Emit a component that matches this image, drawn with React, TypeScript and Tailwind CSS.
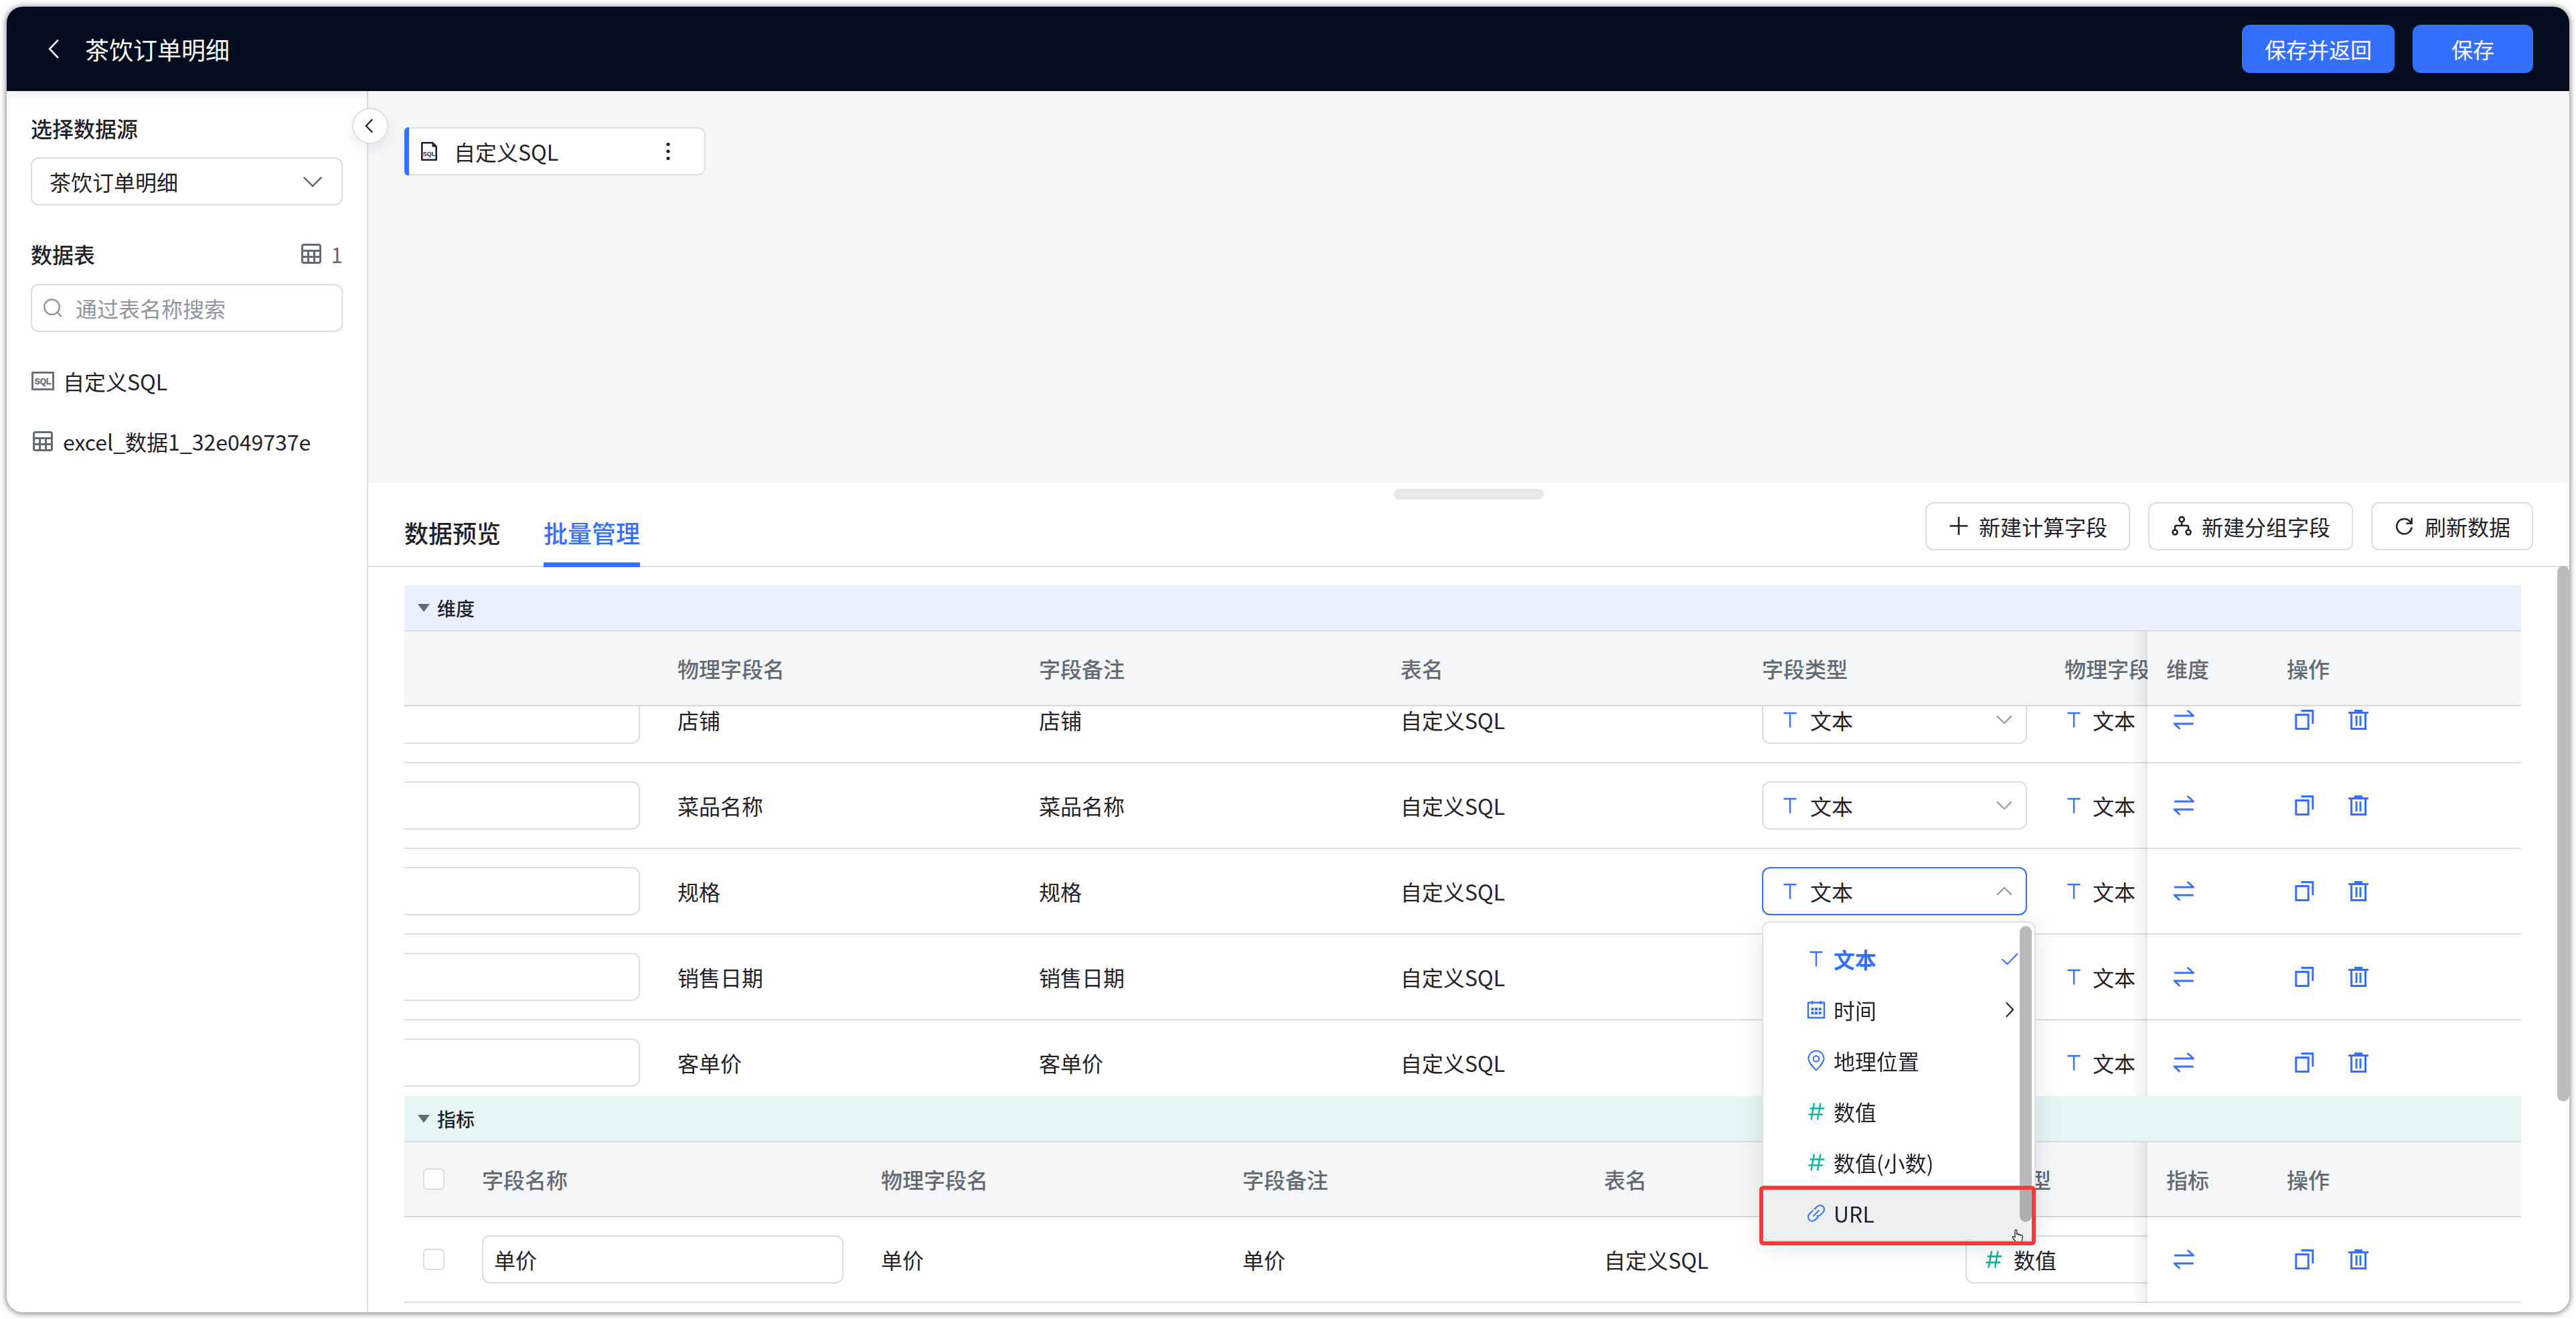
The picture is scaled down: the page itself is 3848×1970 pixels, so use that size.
import React, { useLayoutEffect, useRef } from "react";

type IconProps = { className?: string };

function Chevron({ className = "" }: IconProps) {
  return (
    <svg viewBox="0 0 28 16" fill="none" stroke="currentColor" aria-hidden="true" className={className}>
      <path d="M1.5 1.5 14 14 26.5 1.5" />
    </svg>
  );
}

function ChevronSide({ className = "" }: IconProps) {
  return (
    <svg viewBox="0 0 16 28" fill="none" stroke="currentColor" aria-hidden="true" className={className}>
      <path d="M14 1.5 2 14 14 26.5" />
    </svg>
  );
}

function TableIcon() {
  return (
    <svg viewBox="0 0 30 30" fill="none" stroke="currentColor" strokeWidth="3" aria-hidden="true" className="size-[30px]">
      <rect x="1.5" y="1.5" width="27" height="27" rx="2.5" />
      <path d="M1.5 10.5h27M1.5 19.5h27M10.5 10.5v18M19.5 10.5v18" />
    </svg>
  );
}

function SqlIcon() {
  return (
    <svg viewBox="0 0 34 28" fill="none" stroke="currentColor" aria-hidden="true" className="h-7 w-[34px]">
      <rect x="1.5" y="1.5" width="31" height="25" strokeWidth="2.8" />
      <text x="17" y="18.5" textAnchor="middle" fontSize="12" fontWeight="700" fontFamily="Liberation Sans, sans-serif" fill="currentColor" stroke="currentColor" strokeWidth="0.4">
        SQL
      </text>
    </svg>
  );
}

function SqlFileIcon() {
  return (
    <svg viewBox="0 0 26 30" fill="none" stroke="currentColor" strokeWidth="2.6" strokeLinejoin="round" aria-hidden="true" className="h-[30px] w-[26px]">
      <path d="M2.3 2.3h16l5.400 5.400v20H2.300z" />
      <path d="M18 2v6h6z" fill="currentColor" strokeWidth="1" />
      <text x="13" y="21.5" textAnchor="middle" fontSize="9" fontWeight="700" fontFamily="Liberation Sans, sans-serif" fill="currentColor" stroke="none">
        SQL
      </text>
    </svg>
  );
}

function SearchIcon() {
  return (
    <svg viewBox="0 0 28 28" fill="none" stroke="currentColor" strokeWidth="2.4" aria-hidden="true" className="size-7 shrink-0 text-[#8f959e]">
      <circle cx="12.5" cy="12.5" r="11.3" />
      <path d="m20.5 20.5 6.5 6.5" />
    </svg>
  );
}

function TextIcon() {
  return (
    <svg viewBox="0 0 28 28" fill="none" stroke="#3370ff" strokeWidth="2.4" aria-hidden="true" className="size-7 shrink-0">
      <path d="M4.5 4h19M14 4v21.5" />
    </svg>
  );
}

function HashIcon() {
  return (
    <svg viewBox="0 0 28 28" fill="none" stroke="#0ab59a" strokeWidth="2.4" aria-hidden="true" className="size-7 shrink-0">
      <path d="M4.5 9.5H26M2.5 18.5H24M11 1.5l-4.5 25M20.500 1.500 16 26.500" />
    </svg>
  );
}

function CalendarIcon() {
  return (
    <svg viewBox="0 0 28 28" fill="none" stroke="#3370ff" strokeWidth="2.4" aria-hidden="true" className="size-7 shrink-0">
      <path d="M2 3.5h24V26H2zM8 1v5M20.5 1v5" />
      <path d="M6.5 13h4M12 13h4M17.7 13h4M6.5 19h4M12 19h4M17.7 19h4" strokeWidth="4" />
    </svg>
  );
}

function PinIcon() {
  return (
    <svg viewBox="0 0 28 32" fill="none" stroke="#3370ff" strokeWidth="2" aria-hidden="true" className="h-8 w-7 shrink-0">
      <path d="M14 30.5C8.500 24.500 2.500 19 2.500 13a11.500 11.500 0 0 1 23 0c0 6-6 11.500-11.500 17.500z" />
      <circle cx="14" cy="13.2" r="4.3" />
    </svg>
  );
}

function LinkIcon() {
  return (
    <svg viewBox="0 0 28 28" fill="none" stroke="#3370ff" strokeWidth="2" strokeLinecap="round" aria-hidden="true" className="size-7 shrink-0">
      <path d="m11.5 8 4-4a6.100 6.100 0 0 1 8.700 8.700l-3.700 3.700a6.100 6.100 0 0 1-5 1.700" />
      <path d="m16.500 20-4 4a6.100 6.100 0 0 1-8.700-8.700l3.700-3.700a6.100 6.100 0 0 1 1.500-1.100" />
      <path d="m10 18 8-8" />
    </svg>
  );
}

function SwapIcon() {
  return (
    <svg viewBox="0 0 32 32" fill="none" stroke="currentColor" strokeWidth="2.8" strokeLinecap="round" strokeLinejoin="round" aria-hidden="true" className="size-8">
      <path d="M3 10h27.500L22.500 2.800M29.500 22H2l7.500 7" />
    </svg>
  );
}

function CopyIcon() {
  return (
    <svg viewBox="0 0 32 32" fill="none" stroke="currentColor" strokeWidth="3" aria-hidden="true" className="size-8">
      <path d="M3.800 8.500h18.400v21H3.800zM11.500 2.500h17.300V22" />
    </svg>
  );
}

function TrashIcon() {
  return (
    <svg viewBox="0 0 32 32" fill="none" stroke="currentColor" strokeWidth="3" aria-hidden="true" className="size-8">
      <path d="M2 5.500h30M11 2.500h12M6.500 5.500v24h21v-24M14 10v15M20 10v15" />
    </svg>
  );
}

function PlusIcon() {
  return (
    <svg viewBox="0 0 32 32" fill="none" stroke="currentColor" strokeWidth="2.6" aria-hidden="true" className="size-8">
      <path d="M2.500 15.500h27M16 2v27" />
    </svg>
  );
}

function GroupIcon() {
  return (
    <svg viewBox="0 0 32 32" fill="none" stroke="currentColor" strokeWidth="2.6" aria-hidden="true" className="size-8">
      <circle cx="16" cy="5.800" r="3.700" />
      <circle cx="6" cy="25" r="3.500" />
      <circle cx="26" cy="25" r="3.500" />
      <path d="M16 9.500v5.500M6 21.500V17a2 2 0 0 1 2-2h16a2 2 0 0 1 2 2v4.500" />
    </svg>
  );
}

function RefreshIcon() {
  return (
    <svg viewBox="0 0 32 32" fill="none" stroke="currentColor" strokeWidth="2.6" aria-hidden="true" className="size-8">
      <path d="M26.500 17.500a11.200 11.200 0 1 1-2.800-8.800l2.300 2.300" />
      <path d="M26.500 3.500v8.200h-8" />
    </svg>
  );
}

function HandCursor() {
  return (
    <svg viewBox="0 0 18 20" fill="#fff" stroke="#1a1a1a" strokeWidth="1.3" strokeLinejoin="round" aria-hidden="true" className="h-5 w-[18px]">
      <path d="M5 12V2.200a1.400 1.400 0 0 1 2.800 0V8c0-1.500 2.600-1.300 2.800 0v.5c.3-1.200 2.500-1 2.700.3v.7c.4-1 2.600-.9 2.800.5.200 2.500 0 4.500-1 7.500l-.3 2H6.500c-1-2.500-3.500-4.500-5-7-.8-1.500.8-2.400 2-1.300z" />
    </svg>
  );
}

const typeIcons: Record<string, React.ReactNode> = {
  文本: <TextIcon />,
  数值: <HashIcon />,
};

function TypeSelect({ name, type, open = false }: { name: string; type: string; open?: boolean }) {
  return (
    <div
      className={`flex h-[72px] items-center gap-4 rounded-xl border-2 bg-white pr-5 pl-[26px] ${
        open ? "border-[#3370ff]" : "border-[#d9dde0]"
      }`}
    >
      {typeIcons[type]}
      <select aria-label={`${name} 字段类型`} defaultValue={type} className="h-full min-w-0 flex-1 appearance-none bg-transparent outline-none">
        <option>{type}</option>
      </select>
      <Chevron className={`h-[14px] w-6 shrink-0 stroke-[2.4] text-[#8f959e] ${open ? "rotate-180" : ""}`} />
    </div>
  );
}

const stickyEdge =
  "before:absolute before:top-0 before:-bottom-0.5 before:right-full before:w-6 before:bg-linear-to-l before:from-black/8 before:via-black/3 before:to-transparent";
const headCell = "h-28 border-b-2 border-[#d5d6d8] bg-[#f4f6f8] px-7 font-medium text-left text-[#646a73]";
const bodyCell = "h-32 border-b-2 border-[#dddedf] bg-white px-7 py-0";

type FieldTableProps = { kind: string; rows: string[]; type: string; openRow?: string; scroll?: { x: number; y: number } };

function FieldTable({ kind, rows, type, openRow, scroll }: FieldTableProps) {
  const box = useRef<HTMLDivElement>(null);
  useLayoutEffect(() => {
    if (box.current && scroll) {
      box.current.scrollLeft = scroll.x;
      box.current.scrollTop = scroll.y;
    }
  }, [scroll]);

  return (
    <div ref={box} className="relative max-h-[694px] overflow-auto [scrollbar-width:none]">
      <table className="w-[3766px] min-w-full table-fixed border-separate border-spacing-0 whitespace-nowrap">
        <colgroup>
          <col className="w-[88px]" />
          <col className="w-[596px]" />
          <col className="w-[540px]" />
          <col className="w-[540px]" />
          <col className="w-[540px]" />
          <col className="w-[452px]" />
          <col />
          <col className="w-[180px]" />
          <col className="w-[378px]" />
        </colgroup>
        <thead className="sticky top-0 z-20">
          <tr>
            <th className={headCell}>
              <input type="checkbox" aria-label="全选" className="block size-8 appearance-none rounded-md border-2 border-[#d9dde0] bg-white" />
            </th>
            <th className={headCell}>字段名称</th>
            <th className={headCell}>物理字段名</th>
            <th className={headCell}>字段备注</th>
            <th className={headCell}>表名</th>
            <th className={headCell}>字段类型</th>
            <th className={headCell}>物理字段类型</th>
            <th className={`sticky right-[378px] z-10 ${headCell} ${stickyEdge}`}>{kind}</th>
            <th className={`sticky right-0 z-10 ${headCell}`}>操作</th>
          </tr>
        </thead>
        <tbody>
          {rows.map((name) => (
            <tr key={name}>
              <td className={bodyCell}>
                <input type="checkbox" aria-label={`选择 ${name}`} className="block size-8 appearance-none rounded-md border-2 border-[#d9dde0] bg-white" />
              </td>
              <td className={bodyCell}>
                <input
                  type="text"
                  aria-label={`${name} 字段名称`}
                  defaultValue={name}
                  className="block h-[72px] w-full rounded-xl border-2 border-[#d9dde0] bg-white px-4 outline-none"
                />
              </td>
              <td className={bodyCell}>{name}</td>
              <td className={bodyCell}>{name}</td>
              <td className={bodyCell}>自定义SQL</td>
              <td className={bodyCell}>
                <TypeSelect name={name} type={type} open={name === openRow} />
              </td>
              <td className={bodyCell}>
                <span className="flex items-center gap-3.5">
                  {typeIcons[type]}
                  {type}
                </span>
              </td>
              <td className={`sticky right-[378px] z-10 ${bodyCell} ${stickyEdge}`}>
                <button type="button" aria-label="转换" className="block px-2.5 text-[#3370ff]">
                  <SwapIcon />
                </button>
              </td>
              <td className={`sticky right-0 z-10 ${bodyCell}`}>
                <span className="flex gap-12 px-2.5 text-[#3370ff]">
                  <button type="button" aria-label="复制">
                    <CopyIcon />
                  </button>
                  <button type="button" aria-label="删除">
                    <TrashIcon />
                  </button>
                </span>
              </td>
            </tr>
          ))}
        </tbody>
      </table>
    </div>
  );
}

function SectionBar({ label, className }: { label: string; className: string }) {
  return (
    <button type="button" className={`flex h-[69px] w-full items-center gap-[11px] border-b-2 border-[#dadce2] pl-5 text-[28px] font-medium ${className}`}>
      <svg viewBox="0 0 18 12" fill="#646a73" aria-hidden="true" className="h-3 w-[18px]">
        <path d="M0 0h18L9 12z" />
      </svg>
      {label}
    </button>
  );
}

const menuItems = [
  { label: "文本", icon: <TextIcon /> },
  { label: "时间", icon: <CalendarIcon /> },
  { label: "地理位置", icon: <PinIcon /> },
  { label: "数值", icon: <HashIcon /> },
  { label: "数值(小数)", icon: <HashIcon /> },
  { label: "URL", icon: <LinkIcon /> },
];

function TypeMenu() {
  return (
    <div className="absolute top-[502px] left-[2028px] z-30 w-[409px]">
      <div role="listbox" aria-label="字段类型" className="h-[477px] overflow-hidden rounded-xl border-2 border-[#dee0e3] bg-white pt-4 shadow-[0_8px_40px_rgba(31,35,41,0.12)]">
        {menuItems.map(({ label, icon }) => (
          <button
            key={label}
            type="button"
            role="option"
            aria-selected={label === "文本"}
            className={`flex h-[76px] w-full items-center gap-3 pr-6 pl-[65px] text-left ${
              label === "文本" ? "font-bold text-[#3370ff]" : label === "URL" ? "bg-[#eeeff1]" : ""
            }`}
          >
            {icon}
            <span className="flex-1">{label}</span>
            {label === "文本" && (
              <svg viewBox="0 0 26 20" fill="none" stroke="currentColor" strokeWidth="2" aria-hidden="true" className="h-5 w-[26px]">
                <path d="m1.500 10.500 8 7.500L25 2" />
              </svg>
            )}
            {label === "时间" && <ChevronSide className="mr-[6px] h-6 w-[14px] rotate-180 stroke-[2.4]" />}
          </button>
        ))}
      </div>
      <span className="absolute top-[7px] right-[6px] h-[442px] w-[18px] rounded-full bg-black/27" />
      <span className="absolute top-[460px] right-[18px]">
        <HandCursor />
      </span>
      <span className="absolute top-[395px] right-0 -left-1 h-[89px] rounded-md border-[6px] border-[#f43b3b]" />
    </div>
  );
}

const dimScroll = { x: 304, y: 43 };
const toolButton = "flex h-[72px] items-center gap-3.5 rounded-xl border-2 border-[#d9dde0] bg-white px-8";

export default function App() {
  return (
    <div className="h-screen bg-white p-[10px] font-['Noto_Sans_CJK_SC',sans-serif] text-[32px] leading-[44px] text-[#1f2329]">
      <div className="flex h-full flex-col overflow-hidden rounded-3xl bg-white shadow-[0_1px_10px_1px_rgba(0,0,0,0.5)]">
        <header className="relative flex h-[126px] shrink-0 items-center bg-[#040d1f] pr-[54px] pl-[62px] text-white shadow-[0_6px_16px_rgba(31,35,41,0.08)]">
          <button type="button" aria-label="返回">
            <ChevronSide className="h-[30px] w-[17px] stroke-[2.4]" />
          </button>
          <h1 className="ml-[38px] flex-1 text-[36px]">茶饮订单明细</h1>
          <div className="flex gap-[27px]">
            <button type="button" className="h-[72px] rounded-xl bg-[#3370ff] px-[34px]">
              保存并返回
            </button>
            <button type="button" className="h-[72px] w-[180px] rounded-xl bg-[#3370ff]">
              保存
            </button>
          </div>
        </header>

        <div className="flex min-h-0 flex-1">
          <aside className="w-[540px] shrink-0 border-r-2 border-[#dddedf] px-9 pt-[33px]">
            <label htmlFor="source" className="block font-medium">
              选择数据源
            </label>
            <div className="mt-[22px] flex h-[72px] items-center rounded-xl border-2 border-[#d9dde0] pr-7 pl-[26px]">
              <select id="source" defaultValue="茶饮订单明细" className="h-full min-w-0 flex-1 appearance-none bg-transparent outline-none">
                <option>茶饮订单明细</option>
              </select>
              <Chevron className="h-[17px] w-[30px] stroke-[2.4] text-[#646a73]" />
            </div>

            <div className="mt-[50px] flex items-center justify-between">
              <label htmlFor="search" className="font-medium">
                数据表
              </label>
              <span className="flex items-center gap-3.5 text-[#646a73]">
                <TableIcon />1
              </span>
            </div>
            <div className="mt-[23px] flex h-[72px] items-center gap-5 rounded-xl border-2 border-[#d9dde0] px-[17px]">
              <SearchIcon />
              <input id="search" type="text" placeholder="通过表名称搜索" className="h-full min-w-0 flex-1 bg-transparent outline-none placeholder:text-[#8f959e]" />
            </div>

            <ul className="mt-7">
              <li className="flex h-[90px] items-center gap-3">
                <span className="flex w-9 justify-center text-[#646a73]">
                  <SqlIcon />
                </span>
                自定义SQL
              </li>
              <li className="flex h-[90px] items-center gap-3">
                <span className="flex w-9 justify-center text-[#646a73]">
                  <TableIcon />
                </span>
                excel_数据1_32e049737e
              </li>
            </ul>
          </aside>

          <main className="relative flex min-w-0 flex-1 flex-col">
            <button
              type="button"
              aria-label="收起"
              className="absolute top-[25px] -left-6 z-10 flex size-[54px] items-center justify-center rounded-full border-2 border-[#dee0e3] bg-white pr-1 shadow-[0_8px_16px_rgba(31,35,41,0.08)]"
            >
              <ChevronSide className="h-[22px] w-[13px] stroke-[2.8]" />
            </button>

            <section className="h-[585px] shrink-0 bg-[#f4f6f8] px-[54px] pt-[54px]">
              <div className="relative flex h-[72px] w-[450px] items-center rounded-xl border-2 border-[#dee0e3] bg-white pr-11 pl-[22px]">
                <span className="absolute -inset-y-0.5 -left-0.5 w-[7px] rounded-l-md bg-[#3370ff]" />
                <SqlFileIcon />
                <span className="ml-6 flex-1">自定义SQL</span>
                <button type="button" aria-label="更多">
                  <svg viewBox="0 0 20 28" fill="currentColor" aria-hidden="true" className="h-7 w-5">
                    <circle cx="10" cy="3.5" r="2.6" />
                    <circle cx="10" cy="14" r="2.6" />
                    <circle cx="10" cy="24.5" r="2.6" />
                  </svg>
                </button>
              </div>
            </section>

            <section className="relative flex min-h-0 flex-1 flex-col bg-white">
              <div className="mx-auto mt-[9px] h-4 w-56 shrink-0 rounded-lg bg-[#e7e9e8]" />
              <div className="flex h-[101px] shrink-0 items-start justify-between border-b-2 border-[#dddedf] px-[54px]">
                <nav className="flex gap-16 text-[36px] font-medium">
                  <button type="button" className="h-[101px] border-b-[7px] border-transparent pt-1">
                    数据预览
                  </button>
                  <button type="button" className="h-[101px] border-b-[7px] border-[#3370ff] pt-1 text-[#3370ff]">
                    批量管理
                  </button>
                </nav>
                <div className="mt-1 flex gap-[27px]">
                  <button type="button" className={toolButton}>
                    <PlusIcon />
                    新建计算字段
                  </button>
                  <button type="button" className={toolButton}>
                    <GroupIcon />
                    新建分组字段
                  </button>
                  <button type="button" className={toolButton}>
                    <RefreshIcon />
                    刷新数据
                  </button>
                </div>
              </div>

              <div className="min-h-0 flex-1 overflow-hidden pt-[27px] pr-[72px] pl-[54px]">
                <div className="relative">
                  <SectionBar label="维度" className="bg-[#eaf0ff]" />
                  <FieldTable kind="维度" rows={["店铺", "菜品名称", "规格", "销售日期", "客单价"]} type="文本" openRow="规格" scroll={dimScroll} />
                  <SectionBar label="指标" className="bg-[#e5f6f4]" />
                  <FieldTable kind="指标" rows={["单价"]} type="数值" />
                  <TypeMenu />
                </div>
              </div>
              <span className="absolute top-[124px] right-0 h-[800px] w-[18px] rounded-full bg-[#bbbcbe]" />
            </section>
          </main>
        </div>
      </div>
    </div>
  );
}
